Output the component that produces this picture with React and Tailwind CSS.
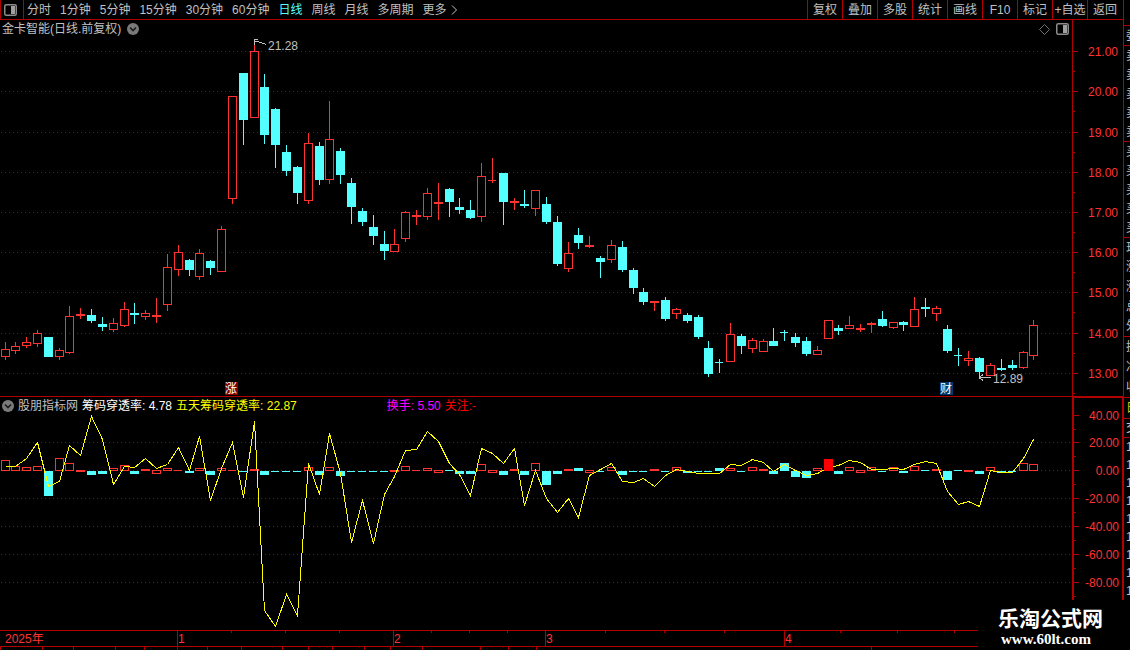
import clsx from "clsx"

const PERIODS = ["分时", "1分钟", "5分钟", "15分钟", "30分钟", "60分钟", "日线", "周线", "月线", "多周期"]
const TOOLS = ["复权", "叠加", "多股", "统计", "画线", "F10", "标记", "+自选", "返回"]

const RED = "#ff3232"
const CYAN = "#54ffff"
const LINE = "#b00000"

// direction, high, body top, body bottom, low
const CANDLES = [
  ["r", 342, 349, 357, 360], ["r", 342, 346, 351, 354], ["r", 337, 342, 346, 348], ["r", 330, 333, 344, 347],
  ["c", 337, 337, 357, 357], ["r", 348, 350, 357, 360], ["r", 306, 316, 353, 354], ["r", 308, 314, 316, 319],
  ["c", 309, 315, 321, 323], ["c", 317, 324, 327, 331], ["r", 318, 323, 330, 332], ["r", 302, 309, 326, 327],
  ["c", 303, 313, 315, 324], ["r", 310, 313, 317, 320], ["r", 298, 315, 317, 323], ["r", 254, 267, 305, 311],
  ["r", 245, 252, 270, 276], ["c", 259, 260, 270, 276], ["r", 249, 253, 277, 280], ["c", 260, 261, 268, 275],
  ["r", 226, 229, 272, 272], ["r", 96, 96, 199, 204], ["c", 73, 73, 120, 145], ["r", 43, 51, 118, 118],
  ["c", 74, 87, 135, 144], ["c", 108, 109, 145, 168], ["c", 145, 152, 171, 176], ["c", 166, 167, 193, 204],
  ["r", 133, 143, 201, 204], ["c", 142, 146, 180, 185], ["r", 101, 139, 180, 184], ["c", 148, 151, 175, 184],
  ["c", 178, 183, 207, 224], ["c", 208, 211, 222, 226], ["c", 215, 227, 236, 245], ["c", 231, 244, 251, 260],
  ["r", 229, 244, 252, 252], ["r", 211, 212, 239, 242], ["r", 210, 215, 217, 225], ["r", 188, 193, 217, 220],
  ["r", 183, 202, 204, 220], ["c", 188, 189, 202, 217], ["c", 198, 207, 210, 214], ["c", 200, 210, 218, 219],
  ["r", 163, 176, 217, 222], ["r", 158, 180, 181, 183], ["c", 173, 173, 202, 225], ["r", 198, 201, 203, 210],
  ["c", 190, 204, 206, 208], ["r", 190, 190, 209, 216], ["c", 197, 204, 222, 224], ["c", 216, 222, 264, 266],
  ["r", 242, 253, 269, 272], ["c", 228, 235, 243, 249], ["r", 236, 245, 247, 248], ["c", 256, 258, 262, 278],
  ["r", 240, 245, 260, 263], ["c", 241, 247, 270, 272], ["c", 268, 270, 288, 294], ["c", 288, 292, 302, 305],
  ["r", 301, 301, 303, 311], ["c", 297, 300, 319, 321], ["r", 308, 309, 314, 319], ["c", 313, 315, 321, 323],
  ["c", 315, 317, 337, 339], ["c", 341, 348, 374, 377], ["c", 359, 362, 363, 373], ["r", 323, 334, 362, 362],
  ["c", 334, 336, 346, 354], ["r", 338, 340, 349, 353], ["r", 339, 341, 352, 352], ["c", 328, 341, 346, 346],
  ["c", 330, 332, 333, 341], ["c", 333, 337, 343, 347], ["c", 337, 341, 354, 356], ["r", 346, 350, 355, 355],
  ["r", 320, 320, 339, 339], ["c", 325, 328, 331, 335], ["r", 316, 325, 329, 329], ["r", 324, 328, 330, 332],
  ["r", 322, 323, 325, 333], ["c", 311, 319, 326, 327], ["r", 322, 322, 328, 329], ["c", 321, 322, 325, 331],
  ["r", 297, 309, 327, 327], ["c", 298, 307, 309, 317], ["r", 306, 308, 314, 321], ["c", 325, 329, 351, 353],
  ["c", 348, 355, 356, 366], ["r", 351, 358, 361, 366], ["c", 357, 358, 372, 379], ["r", 363, 365, 376, 376],
  ["c", 359, 368, 370, 371], ["c", 360, 365, 368, 370], ["r", 351, 352, 368, 369], ["r", 320, 325, 356, 360],
]

// direction, top, bottom
const BARS = [
  ["r", 460, 471], ["r", 466, 471], ["r", 467, 471], ["r", 466, 471], ["c", 471, 496], ["r", 458, 471],
  ["r", 463, 471], ["r", 470, 472], ["c", 471, 475], ["c", 471, 474], ["r", 468, 471], ["r", 465, 471],
  ["c", 471, 474], ["r", 469, 471], ["r", 470, 474], ["r", 468, 471], ["r", 470, 471], ["c", 471, 473],
  ["r", 468, 471], ["c", 471, 475], ["r", 468, 471], ["r", 470, 471], ["c", 471, 472], ["r", 469, 471],
  ["c", 471, 475], ["c", 471, 472], ["c", 471, 472], ["c", 471, 472], ["r", 467, 471], ["c", 471, 475],
  ["r", 467, 471], ["c", 471, 476], ["c", 471, 472], ["c", 471, 472], ["c", 471, 472], ["c", 471, 472],
  ["r", 470, 472], ["r", 466, 471], ["r", 470, 471], ["r", 468, 471], ["r", 470, 473], ["c", 470, 471],
  ["c", 471, 474], ["c", 471, 474], ["r", 464, 471], ["r", 470, 473], ["c", 471, 475], ["r", 469, 471],
  ["c", 471, 475], ["r", 463, 471], ["c", 471, 485], ["c", 471, 474], ["r", 469, 471], ["c", 468, 471],
  ["r", 470, 473], ["c", 471, 472], ["r", 467, 471], ["c", 471, 475], ["c", 471, 472], ["c", 471, 472],
  ["r", 469, 471], ["c", 471, 472], ["r", 467, 471], ["c", 471, 473], ["c", 471, 472], ["c", 471, 472],
  ["c", 468, 471], ["r", 468, 471], ["c", 471, 472], ["r", 467, 471], ["r", 469, 471], ["c", 471, 474],
  ["c", 463, 471], ["c", 471, 477], ["c", 471, 478], ["r", 468, 471], ["r", 459, 471], ["c", 471, 474],
  ["r", 467, 471], ["r", 470, 473], ["r", 467, 471], ["c", 471, 472], ["r", 467, 471], ["c", 471, 473],
  ["r", 466, 471], ["c", 470, 471], ["r", 469, 471], ["c", 471, 480], ["c", 470, 471], ["r", 470, 472],
  ["c", 471, 474], ["r", 467, 471], ["c", 471, 473], ["c", 471, 472], ["r", 463, 471], ["r", 464, 471],
]

const FIVE_DAY = [
  466, 466, 458, 442, 486, 481, 445, 455, 416, 439, 484, 466, 467, 458, 468, 464, 447, 470, 436, 500, 468, 442,
  497, 421, 610, 626, 594, 615, 463, 494, 433, 473, 542, 500, 543, 494, 476, 450, 449, 431, 441, 463, 474, 495,
  448, 453, 463, 448, 505, 470, 498, 512, 498, 517, 475, 469, 463, 481, 482, 478, 486, 475, 469, 471, 473, 473,
  473, 464, 465, 459, 462, 471, 464, 470, 475, 473, 467, 465, 460, 462, 469, 469, 468, 469, 464, 461, 463, 491,
  504, 501, 506, 470, 472, 472, 458, 439,
]

const PRICE_TICKS = [
  [51, "21.00"], [91, "20.00"], [132, "19.00"], [172, "18.00"], [212, "17.00"],
  [252, "16.00"], [292, "15.00"], [333, "14.00"], [373, "13.00"],
]
const RATE_TICKS = [
  [415, "40.00"], [442, "20.00"], [470, "0.00"], [498, "-20.00"], [526, "-40.00"], [554, "-60.00"], [582, "-80.00"],
]
const MONTHS = [[177, "1"], [393, "2"], [545, "3"], [784, "4"]]
const WEEKS = [231, 285, 339, 431, 469, 507, 605, 664, 724, 840, 897, 954]
const CYCLES = [0, 42, 73, 115, 144, 177, 207, 241, 282, 308, 332, 364, 390, 422, 480, 508, 536, 871]

// the quote panel is folded away, only the edge of each row shows
const QUOTE_GROUPS = [
  { rows: [], className: "h-[26px]" },
  { rows: ["委"], className: "h-5" },
  { rows: ["卖", "卖", "卖", "卖", "卖"], className: "h-24" },
  { rows: ["买", "买", "买", "买", "买"], className: "h-24" },
  { rows: ["现", "涨", "涨", "总", "外"], className: "h-[99px]" },
  { rows: ["换", "净", "收"], className: "h-[61px]" },
  { rows: ["日"], className: "h-[21px] text-[#d0d000]" },
  { rows: ["交"], className: "h-[19px]" },
]
const TRADES = ["1", "1", "1", "1", "1", "1", "1", "1", "1"]

// y of the first pixel row of each chart area
const PRICE_TOP = 38
const RATE_TOP = 414

const slotX = (i) => Math.floor(5 + i * 10.83)

function Body({ i, dir, top, bottom }) {
  const x = slotX(i) - 4
  const h = bottom - top
  if (dir === "c" || h < 3) {
    return <rect x={x} y={top} width={h === 1 ? 8 : 9} height={h} fill={dir === "c" ? CYAN : RED} />
  }
  return <rect x={x + 0.5} y={top + 0.5} width={8} height={h - 1} fill="none" stroke={RED} />
}

function Candle({ i, data }) {
  const [dir, high, top, bottom, low] = data
  const color = dir === "c" ? CYAN : RED
  return (
    <g>
      <rect x={slotX(i)} y={high} width={1} height={top - high} fill={color} />
      <rect x={slotX(i)} y={bottom} width={1} height={low - bottom} fill={color} />
      <Body i={i} dir={dir} top={top} bottom={bottom} />
    </g>
  )
}

function GridLines({ rows }) {
  return rows.map((y) => (
    <line key={y} x1="1" x2="100%" y1={y + 0.5} y2={y + 0.5} stroke="#a00000" strokeDasharray="1 3" />
  ))
}

function Badge({ x, y, fill, children }) {
  return (
    <g>
      <rect x={x} y={y} width={13} height={13} fill={fill} />
      <text x={x + 6} y={y + 11} fontSize={12} textAnchor="middle" fill="#ffffff">{children}</text>
    </g>
  )
}

function PriceChart() {
  return (
    <svg className="block min-h-0 w-full flex-1" role="img" aria-label="日线">
      <g transform={`translate(0 ${-PRICE_TOP})`} shapeRendering="crispEdges">
        <GridLines rows={PRICE_TICKS.map(([y]) => y)} />
        {CANDLES.map((data, i) => <Candle key={i} i={i} data={data} />)}
        <path d="M254.5 45V40M254 39.5h4M255 41.5h3l4 1.500l4 1.500" fill="none" stroke="#c0c0c0" />
        <text x={268} y={50} fontSize={12} fill="#c0c0c0">21.28</text>
        <path d="M979 377.5H991M979.5 377.500L983 374.500M979.5 377.500L983 380.500" fill="none" stroke="#c0c0c0" />
        <text x={993} y={383} fontSize={12} fill="#c0c0c0">12.89</text>
        <Badge x={225} y={382} fill="#800000">涨</Badge>
        <Badge x={940} y={382} fill="#003a70">财</Badge>
      </g>
    </svg>
  )
}

function RateChart() {
  const points = FIVE_DAY.map((y, i) => `${slotX(i) + 0.5},${y + 0.5}`).join(" ")
  return (
    <svg className="block min-h-0 w-full flex-1" role="img" aria-label="筹码穿透率">
      <g transform={`translate(0 ${-RATE_TOP})`} shapeRendering="crispEdges">
        <GridLines rows={RATE_TICKS.slice(1).map(([y]) => y)} />
        {BARS.map(([dir, top, bottom], i) => <Body key={i} i={i} dir={dir} top={top} bottom={bottom} />)}
        <polyline points={points} fill="none" stroke="#ffff00" />
        <rect x={slotX(76) - 4} y={459} width={9} height={12} fill="#ff0000" />
      </g>
    </svg>
  )
}

function Axis({ ticks, offset, step, className }) {
  return (
    <svg className={clsx("block h-full w-[51px] shrink-0 border-[#b00000]", className)}>
      <g transform={`translate(0 ${-offset})`}>
        {ticks.map(([y, label]) => (
          <g key={label}>
            <rect x={0} y={y} width={5} height={1} fill={LINE} />
            <rect x={0} y={y + step} width={2} height={1} fill={LINE} />
            <text x={45} y={y + 5} fontSize={12} textAnchor="end" fill={RED}>{label}</text>
          </g>
        ))}
      </g>
    </svg>
  )
}

function PanelIcon() {
  return (
    <svg width="13" height="12" viewBox="0 0 13 12">
      <rect x="0.75" y="0.75" width="11.5" height="10.5" rx="1.500" fill="none" stroke="#8c8c8c" strokeWidth="1.500" />
      <rect x="7" y="2" width="4" height="8" fill="#a0a0a0" />
    </svg>
  )
}

function MenuDot() {
  return (
    <svg width="12" height="12" viewBox="0 0 12 12">
      <circle cx="6" cy="6" r="6" fill="#7a7a7a" />
      <path d="M3 4.500L6 7.500L9 4.500" fill="none" stroke="#1a1a1a" strokeWidth="1.600" />
    </svg>
  )
}

function Toolbar() {
  return (
    <nav className="flex h-5 shrink-0 border-b border-[#b00000] pr-px text-[#c0c0c0]">
      <button type="button" aria-label="面板" className="flex w-6 items-center justify-center border-x border-[#b00000] pr-1">
        <PanelIcon />
      </button>
      <div className="flex flex-1 items-center gap-[9px] pl-[3px]">
        {PERIODS.map((name) => (
          <button key={name} type="button" className={clsx("whitespace-nowrap", name === "日线" && "text-[#54ffff]")}>
            {name}
          </button>
        ))}
        <button type="button" className="flex items-center gap-1 whitespace-nowrap">
          更多
          <svg width="7" height="10" viewBox="0 0 7 10">
            <path d="M1 0.500L5.500 5L1 9.500" fill="none" stroke="#c0c0c0" />
          </svg>
        </button>
      </div>
      {TOOLS.map((name) => (
        <button key={name} type="button" className="w-[35px] whitespace-nowrap border-l border-[#b00000] text-center">
          {name}
        </button>
      ))}
    </nav>
  )
}

function DateAxis() {
  return (
    <div className="h-5 shrink-0 border-t border-[#b00000]">
      <svg className="block h-full w-full">
        <text x={5} y={12} fontSize={12} fill={RED}>2025年</text>
        {MONTHS.map(([x, label]) => (
          <g key={label}>
            <rect x={x} y={0} width={1} height={15} fill={LINE} />
            <text x={x + 1} y={12} fontSize={12} fill={RED}>{label}</text>
          </g>
        ))}
        {WEEKS.map((x) => <rect key={x} x={x} y={0} width={1} height={2} fill={LINE} />)}
        <rect x={0} y={15} width="100%" height={1} fill={LINE} />
        {CYCLES.map((x) => <rect key={x} x={x} y={16} width={1} height={4} fill={LINE} />)}
      </svg>
    </div>
  )
}

function QuoteStrip() {
  return (
    <aside className="w-[7px] shrink-0 overflow-hidden border-l border-[#b00000] text-[#c0c0c0]">
      {QUOTE_GROUPS.map(({ rows, className }, g) => (
        <div key={g} className={clsx("flex flex-col border-b border-[#b00000] pl-0.5", className)}>
          {rows.map((label, i) => (
            <span key={i} className="flex flex-1 items-center whitespace-nowrap">{label}</span>
          ))}
        </div>
      ))}
      {TRADES.map((label, i) => (
        <span key={i} className="flex h-[18px] items-center pl-0.5">{label}</span>
      ))}
    </aside>
  )
}

export default function App() {
  return (
    <div className="relative flex h-screen overflow-hidden bg-black font-['Liberation_Sans','Noto_Sans_CJK_SC',sans-serif] text-xs leading-none">
      <div className="flex min-w-0 flex-1 flex-col">
        <Toolbar />
        <section className="flex min-h-0 flex-[377] border-b border-[#b00000]">
          <div className="flex min-w-0 flex-1 flex-col">
            <header className="flex h-[18px] shrink-0 items-center gap-1.5 pl-0.5 text-[#c0c0c0]">
              <h1>金卡智能(日线.前复权)</h1>
              <button type="button" aria-label="菜单"><MenuDot /></button>
              <svg className="ml-auto" width="11" height="11" viewBox="0 0 11 11">
                <path d="M5.500 0.500L10.500 5.500L5.500 10.500L0.500 5.500Z" fill="none" stroke="#707070" />
              </svg>
              <button type="button" aria-label="侧栏" className="mr-[3px]"><PanelIcon /></button>
            </header>
            <PriceChart />
          </div>
          <Axis ticks={PRICE_TICKS} offset={20} step={20} className="border-l" />
        </section>
        <section className="flex min-h-0 flex-[233]">
          <div className="flex min-w-0 flex-1 flex-col">
            <header className="flex h-[17px] shrink-0 items-center gap-1 whitespace-nowrap pl-0.5 text-[#c0c0c0]">
              <button type="button" aria-label="指标"><MenuDot /></button>
              <h2>股朋指标网</h2>
              <span className="text-white">筹码穿透率: 4.78</span>
              <span className="text-[#ffff00]">五天筹码穿透率: 22.87</span>
              <span className="ml-[86px] text-[#ff00ff]">换手: 5.50</span>
              <span className="text-[#ff0000]">关注:-</span>
            </header>
            <RateChart />
          </div>
          <Axis ticks={RATE_TICKS} offset={398} step={14} className="border-l-2 border-r border-t" />
        </section>
        <DateAxis />
      </div>
      <QuoteStrip />
      <footer className="absolute bottom-0 right-0 h-[50px] w-[152px] bg-black pl-5 pt-[7px] text-white">
        <p className="text-[21px] font-bold leading-6">乐淘公式网</p>
        <p className="pl-[3px] font-['Liberation_Serif',serif] text-[15px] font-bold leading-4">www.60lt.com</p>
      </footer>
    </div>
  )
}
